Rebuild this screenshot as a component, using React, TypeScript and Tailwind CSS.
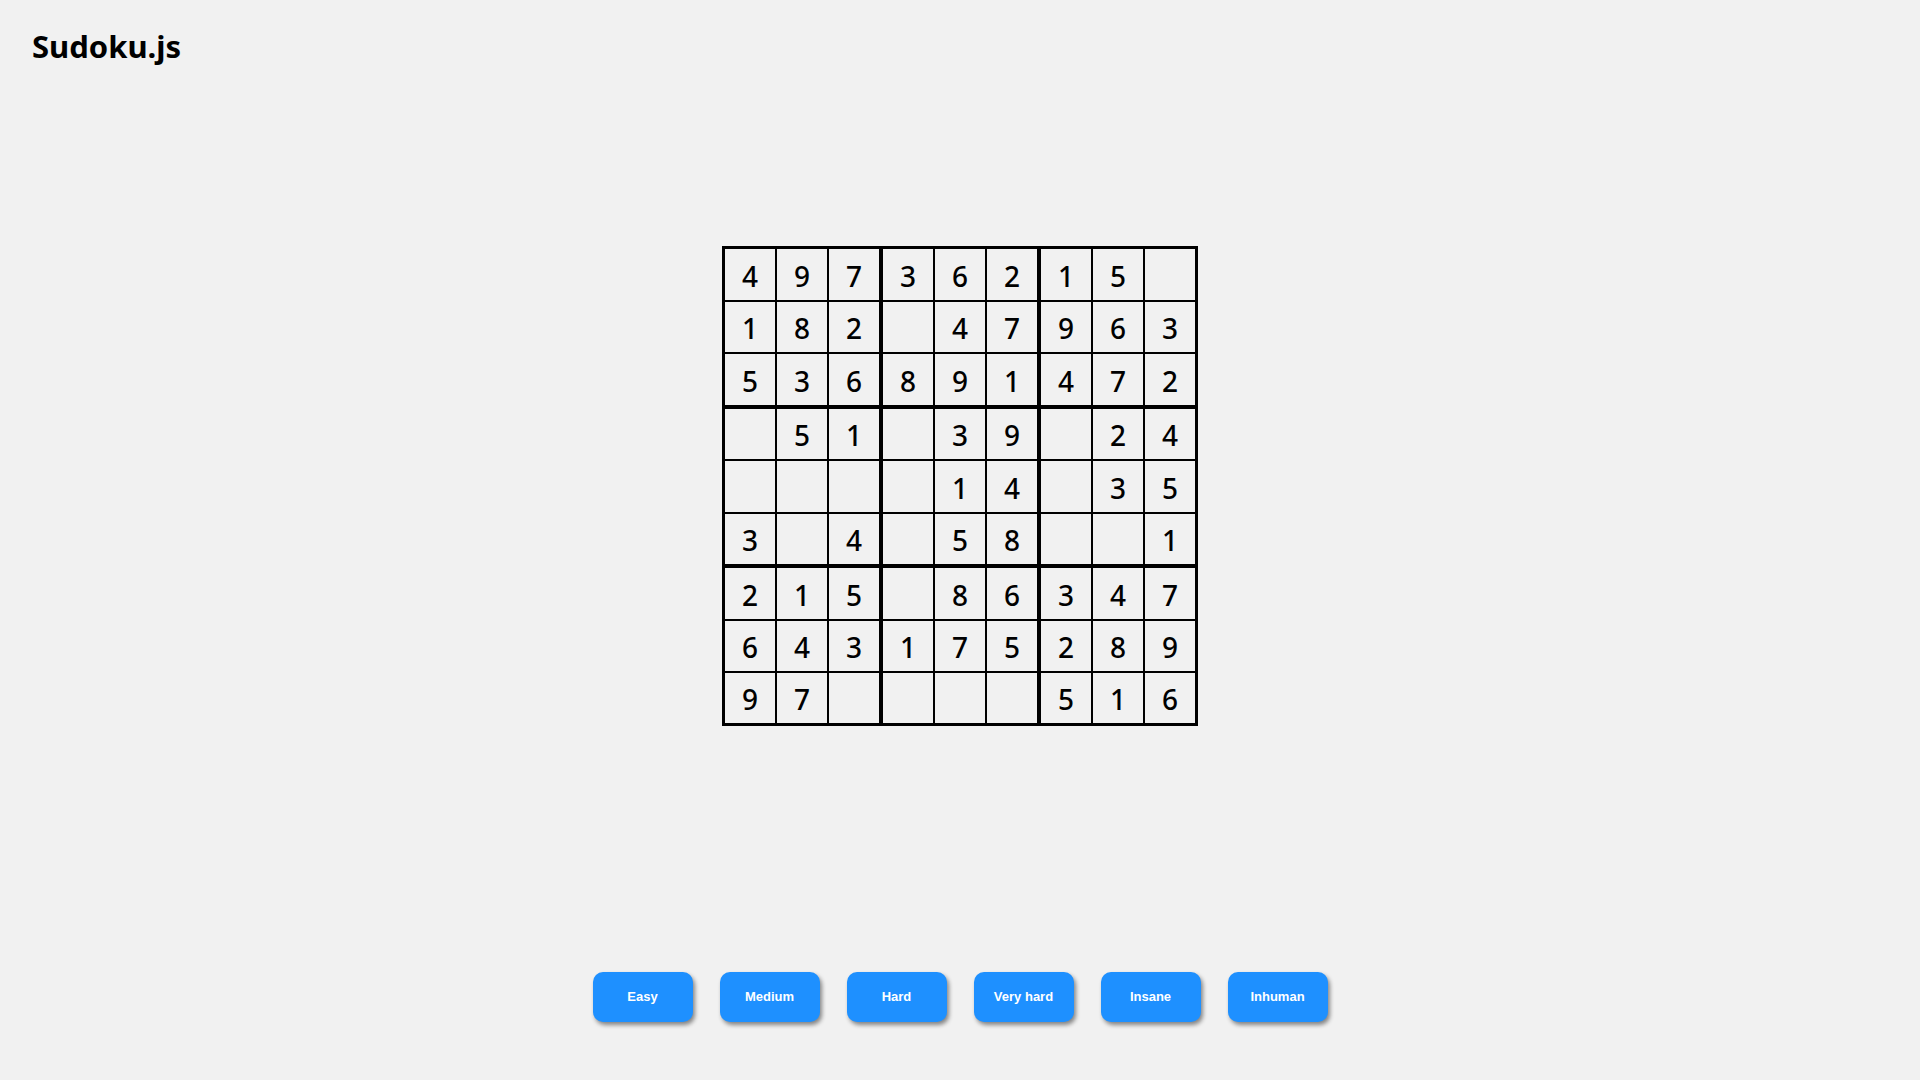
import * as React from "react"

const puzzle: string[] = [
  "49736215.",
  "182.47963",
  "536891472",
  ".51.39.24",
  "....14.35",
  "3.4.58..1",
  "215.86347",
  "643175289",
  "97....516",
]

const levels = ["Easy", "Medium", "Hard", "Very hard", "Insane", "Inhuman"]

function Cell({ value, row, col }: { value: string; row: number; col: number }) {
  const right = col === 8 ? "" : col % 3 === 2 ? "border-r-4" : "border-r-2"
  const bottom = row === 8 ? "" : row % 3 === 2 ? "border-b-4" : "border-b-2"
  const height = row % 2 === 0 && row < 8 ? "h-[51px]" : "h-[50px]"
  return (
    <div
      className={`box-content w-[50px] ${height} ${right} ${bottom} border-black flex items-center justify-center text-[28px] font-medium text-black`}
    >
      <span className="translate-y-px">{value === "." ? "" : value}</span>
    </div>
  )
}

export default function App() {
  return (
    <div
      className="min-h-screen w-full bg-[#f1f1f1] flex flex-col"
      style={{ fontFamily: '"Noto Sans", "Open Sans", sans-serif' }}
    >
      <h1 className="pl-[32px] pt-[24px] text-[31px] font-bold leading-[44px] text-black">
        Sudoku.js
      </h1>

      <div className="flex justify-center mt-[178px]">
        <div className="border-[3px] border-black flex flex-col">
          {puzzle.map((line, r) => (
            <div key={r} className="flex">
              {line.split("").map((ch, c) => (
                <Cell key={c} value={ch} row={r} col={c} />
              ))}
            </div>
          ))}
        </div>
      </div>

      <div className="flex justify-center gap-[27px] mt-[246px]">
        {levels.map((level) => (
          <button
            key={level}
            className="w-[100px] h-[50px] rounded-[10px] bg-[#1e90ff] text-white text-[13px] font-bold shadow-[2px_3px_4px_rgba(0,0,0,0.45)]"
            style={{ fontFamily: '"Liberation Sans", Arial, sans-serif' }}
          >
            {level}
          </button>
        ))}
      </div>
    </div>
  )
}
